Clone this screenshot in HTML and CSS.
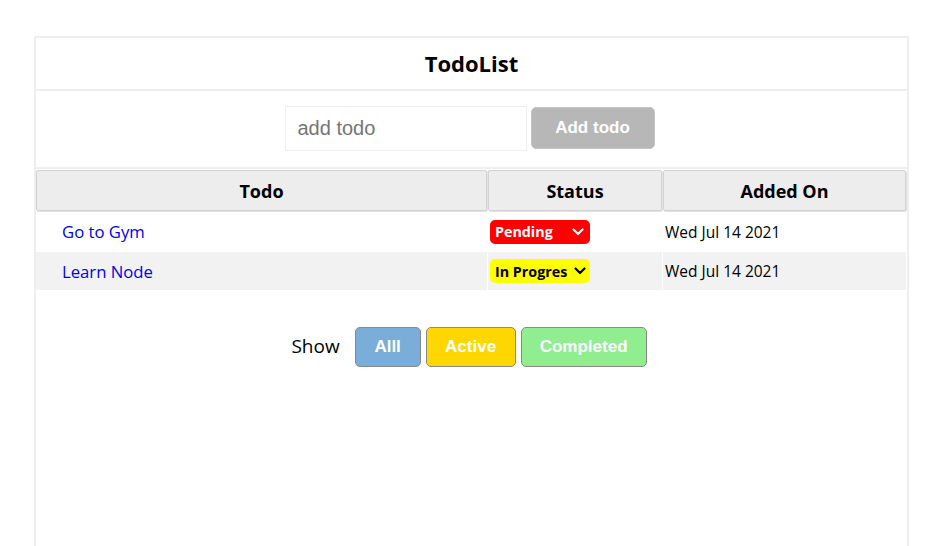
FILE: index.html
```html
<!DOCTYPE html>
<html lang="en">
<head>
<meta charset="utf-8">
<title>TodoList</title>
<link rel="stylesheet" href="styles.css">
</head>
<body>
<div class="app">
  <div class="title">TodoList</div>
  <div class="add">
    <input class="add-input" type="text" placeholder="add todo">
    <button class="add-btn">Add todo</button>
  </div>
  <table class="todos">
    <thead>
      <tr>
        <th class="c-todo">Todo</th>
        <th class="c-status">Status</th>
        <th class="c-date">Added On</th>
      </tr>
    </thead>
    <tbody>
      <tr class="r1">
        <td class="todo-name"><a href="#">Go to Gym</a></td>
        <td class="status-cell">
          <div class="status pending"><span class="status-text">Pending</span>
            <svg class="chev" width="12" height="8" viewBox="0 0 12 8"><path d="M1.5 1.5 L6 6 L10.5 1.5" fill="none" stroke="currentColor" stroke-width="2.2" stroke-linecap="round" stroke-linejoin="round"/></svg>
          </div>
        </td>
        <td class="date">Wed Jul 14 2021</td>
      </tr>
      <tr class="alt">
        <td class="todo-name"><a href="#">Learn Node</a></td>
        <td class="status-cell">
          <div class="status progress"><span class="status-text">In Progres</span>
            <svg class="chev" width="12" height="8" viewBox="0 0 12 8"><path d="M1.5 1.5 L6 6 L10.5 1.5" fill="none" stroke="currentColor" stroke-width="2.2" stroke-linecap="round" stroke-linejoin="round"/></svg>
          </div>
        </td>
        <td class="date">Wed Jul 14 2021</td>
      </tr>
    </tbody>
  </table>
  <div class="filters">
    <span class="show">Show</span>
    <button class="fbtn all">Alll</button>
    <button class="fbtn active">Active</button>
    <button class="fbtn completed">Completed</button>
  </div>
</div>
</body>
</html>
```

FILE: styles.css
```css
html, body {
  margin: 0;
  padding: 0;
  background: #fff;
}

body {
  font-family: "Open Sans", "Noto Sans", sans-serif;
  color: #000;
}

.app {
  box-sizing: border-box;
  width: 875px;
  min-height: 620px;
  margin: 36px 0 0 34px;
  border: 2px solid #eeeeee;
}

.title {
  box-sizing: content-box;
  height: 50px;
  padding-bottom: 1px;
  display: flex;
  align-items: center;
  justify-content: center;
  font-size: 22px;
  font-weight: 700;
  border-bottom: 2px solid #eeeeee;
}

.add {
  box-sizing: content-box;
  height: 61px;
  display: flex;
  align-items: flex-start;
  justify-content: center;
  gap: 4px;
  padding: 15px 4px 0 0;
  border-bottom: 2px solid #eeeeee;
}

.add-input {
  box-sizing: border-box;
  width: 242px;
  height: 45px;
  border: 1px solid #eeeeee;
  padding: 0 12px;
  font-family: "Liberation Sans", Arial, sans-serif;
  font-size: 20px;
  outline: none;
}

.add-input::placeholder {
  color: #757575;
}

.add-btn {
  box-sizing: border-box;
  width: 124px;
  height: 42px;
  margin-top: 1px;
  background: #b7b7b7;
  border: 1px solid #c4c4c4;
  border-radius: 5px;
  color: #fff;
  font-family: "Liberation Sans", Arial, sans-serif;
  font-weight: 700;
  font-size: 17px;
}

.todos {
  width: calc(100% + 1px);
  margin-left: -1px;
  border-collapse: separate;
  border-spacing: 1px 1px;
}

.todos th {
  box-sizing: border-box;
  height: 41px;
  background: #ededed;
  border: 1px solid #d2d2d2;
  border-radius: 2px;
  box-shadow: 1px 1px 1px rgba(0, 0, 0, 0.12);
  font-size: 18px;
  font-weight: 700;
  padding: 0;
}

.c-todo { width: 451px; }
.c-status { width: 174px; }

.todos td {
  height: 38px;
  padding: 0;
}

.todos tr.r1 td {
  height: 39px;
}

.todos tr.alt td {
  background: #f2f2f2;
}

.todo-name {
  padding-left: 26px !important;
  font-size: 16.7px;
}

.todo-name a {
  color: #0000ee;
  text-decoration: none;
}

.status-cell {
  padding-left: 2px !important;
}

.status {
  box-sizing: border-box;
  width: 100px;
  height: 24px;
  border-radius: 5px;
  display: flex;
  align-items: center;
  justify-content: space-between;
  padding: 0 6px 0 5px;
  font-size: 14.3px;
  font-weight: 700;
}

.status.pending {
  background: #ff0000;
  color: #fff;
}

.status.progress {
  background: #ffff00;
  color: #000;
  padding-right: 4px;
}

.status .chev {
  display: block;
  flex: none;
}

.date {
  padding-left: 2px !important;
  font-size: 15.5px;
}

.filters {
  display: flex;
  align-items: center;
  justify-content: center;
  gap: 5px;
  margin-top: 36px;
  padding-right: 5px;
}

.show {
  font-size: 19px;
  margin-right: 10px;
  margin-bottom: 3px;
}

.fbtn {
  box-sizing: border-box;
  height: 40px;
  border: 1px solid #888888;
  border-radius: 5px;
  color: #fff;
  font-family: "Liberation Sans", Arial, sans-serif;
  font-weight: 700;
  font-size: 17px;
  padding: 0;
}

.fbtn.all {
  width: 66px;
  background: #7aaed8;
}

.fbtn.active {
  width: 90px;
  background: #ffd700;
}

.fbtn.completed {
  width: 126px;
  background: #90ee90;
}
```
